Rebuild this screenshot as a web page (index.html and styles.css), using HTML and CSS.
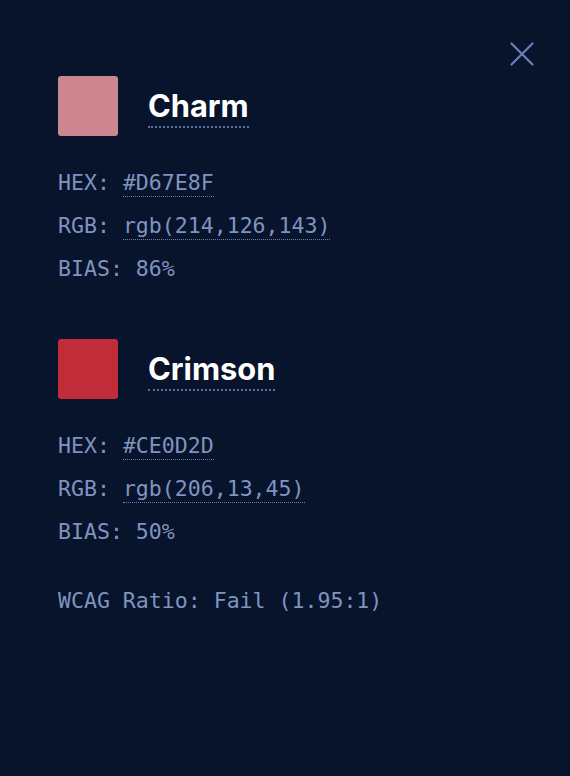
FILE: index.html
```html
<!DOCTYPE html>
<html lang="en">
<head>
<meta charset="utf-8">
<title>Contrast</title>
<link rel="stylesheet" href="styles.css">
</head>
<body>
<div class="panel">
  <button class="close" aria-label="Close">
    <svg width="26" height="26" viewBox="0 0 26 26"><path d="M2.5 2.5 L23.5 23.5 M23.5 2.5 L2.5 23.5" stroke="currentColor" stroke-width="2.2" fill="none" stroke-linecap="round"/></svg>
  </button>

  <section class="color">
    <div class="head">
      <div class="swatch charm"></div>
      <h2 class="name"><span>Charm</span></h2>
    </div>
    <div class="info">
      <div class="line">HEX: <span class="val">#D67E8F</span></div>
      <div class="line">RGB: <span class="val">rgb(214,126,143)</span></div>
      <div class="line">BIAS: 86%</div>
    </div>
  </section>

  <section class="color second">
    <div class="head">
      <div class="swatch crimson"></div>
      <h2 class="name"><span>Crimson</span></h2>
    </div>
    <div class="info">
      <div class="line">HEX: <span class="val">#CE0D2D</span></div>
      <div class="line">RGB: <span class="val">rgb(206,13,45)</span></div>
      <div class="line">BIAS: 50%</div>
    </div>
  </section>

  <div class="ratio line">WCAG Ratio: Fail (1.95:1)</div>
</div>
</body>
</html>
```
FILE: styles.css
```css
html, body {
  margin: 0;
  padding: 0;
  background: #07142b;
  height: 100%;
}
.panel {
  position: relative;
  padding: 76px 0 0 58px;
  box-sizing: border-box;
  min-height: 776px;
}
.close {
  position: absolute;
  top: 41px;
  right: 35px;
  background: none;
  border: 0;
  padding: 0;
  color: #6a7fb6;
  width: 26px;
  height: 26px;
  cursor: pointer;
}
.close svg { display: block; }
.head {
  display: flex;
  align-items: flex-start;
  gap: 30px;
  height: 60px;
}
.swatch {
  width: 60px;
  height: 60px;
  border-radius: 3px;
  flex: none;
}
.charm { background: #cd8690; }
.crimson { background: #c02c37; }
.name {
  margin: 15px 0 0;
  font-family: Inter, "Liberation Sans", sans-serif;
  font-weight: 700;
  font-size: 30.8px;
  color: #ffffff;
  line-height: 1;
}
.name span {
  display: inline-block;
  padding-bottom: 4px;
  border-bottom: 2px dotted #5a6ea8;
}
.info {
  margin-top: 25px;
}
.line {
  font-family: "DejaVu Sans Mono", "Liberation Mono", monospace;
  font-size: 21.55px;
  line-height: 43px;
  color: #8093c0;
}
.val {
  border-bottom: 1px dotted #6a7fb6;
  padding-bottom: 1px;
}
.second {
  margin-top: 49px;
}
.ratio {
  margin-top: 26px;
}
```
